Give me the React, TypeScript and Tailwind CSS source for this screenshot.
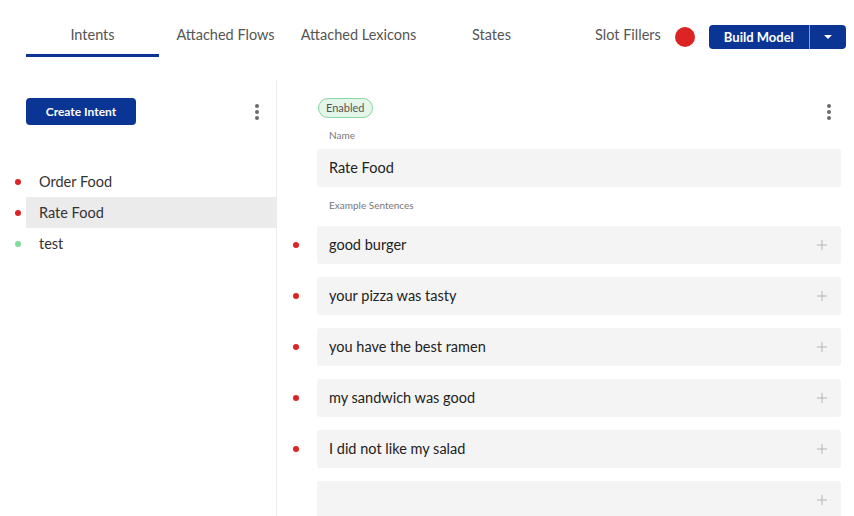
import { Plus } from "lucide-react";

const tabs = ["Intents", "Attached Flows", "Attached Lexicons", "States"];

const intents = [
    { name: "Order Food", color: "bg-[#dc2424]", active: false },
    { name: "Rate Food", color: "bg-[#dc2424]", active: true },
    { name: "test", color: "bg-[#7ddc97]", active: false },
];

const sentences = [
    "good burger",
    "your pizza was tasty",
    "you have the best ramen",
    "my sandwich was good",
    "I did not like my salad",
    "",
];

function Kebab() {
    return (
        <div className="flex flex-col items-center gap-[2px] w-[4px]">
            <span className="w-[4px] h-[4px] rounded-full bg-[#6b6b6b]" />
            <span className="w-[4px] h-[4px] rounded-full bg-[#6b6b6b]" />
            <span className="w-[4px] h-[4px] rounded-full bg-[#6b6b6b]" />
        </div>
    );
}

export default function App() {
    return (
        <div
            className="w-[854px] h-[516px] overflow-hidden bg-white text-[#333]"
            style={{ fontFamily: "Lato, 'Open Sans', sans-serif" }}
        >
            {/* top tabs */}
            <header className="flex items-start h-[80px] pt-[14px] pl-[26px]">
                {tabs.map((t, i) => (
                    <div
                        key={t}
                        className={
                            "w-[133px] h-[43px] pt-[2px] flex items-center justify-center text-[14.5px] text-[#555] border-b-[3px] " +
                            (i === 0 ? "border-[#0b3594]" : "border-transparent")
                        }
                    >
                        {t}
                    </div>
                ))}
                <div className="h-[42px] flex items-center ml-[37px] text-[14.5px] text-[#555]">Slot Fillers</div>
                <div className="h-[46px] flex items-center ml-[14px]">
                    <span className="w-[20px] h-[20px] rounded-full bg-[#dc2424]" />
                </div>
                <div className="h-[46px] flex items-center ml-[14px]">
                    <div className="flex h-[24px] w-[137px] rounded-[4px] bg-[#0b3594] text-white">
                        <div className="w-[101px] pt-[1px] flex items-center justify-center text-[13px] font-bold border-r border-[#8a9bc6]">
                            Build Model
                        </div>
                        <div className="flex-1 flex items-center justify-center">
                            <span className="w-0 h-0 border-l-[4px] border-r-[4px] border-t-[4px] border-l-transparent border-r-transparent border-t-white" />
                        </div>
                    </div>
                </div>
            </header>

            <div className="flex h-[436px]">
                {/* intents list */}
                <aside className="w-[277px] border-r border-[#ececec] pt-[18px]">
                    <div className="flex items-center justify-between pl-[26px] pr-[17px]">
                        <button className="h-[27px] w-[110px] rounded-[4px] bg-[#0b3594] text-white text-[12px] font-bold">
                            Create Intent
                        </button>
                        <Kebab />
                    </div>
                    <ul className="mt-[41px]">
                        {intents.map((it) => (
                            <li key={it.name} className="flex items-center h-[31px]">
                                <div className="w-[26px] pl-[15px]">
                                    <span className={"block w-[6px] h-[6px] rounded-full " + it.color} />
                                </div>
                                <div
                                    className={
                                        "flex-1 h-full flex items-center pl-[13px] text-[14.5px] text-[#333] " +
                                        (it.active ? "bg-[#ebebeb]" : "")
                                    }
                                >
                                    {it.name}
                                </div>
                            </li>
                        ))}
                    </ul>
                </aside>

                {/* intent detail */}
                <main className="flex-1 pt-[18px] pr-[13px]">
                    <div className="flex items-start justify-between pl-[41px] pr-[10px]">
                        <span className="h-[20px] px-[7px] flex items-center rounded-full border border-[#86d9a0] bg-[#e3f6e9] text-[11px] text-[#555]">
                            Enabled
                        </span>
                        <div className="mt-[6px]">
                            <Kebab />
                        </div>
                    </div>
                    <div className="pl-[52px] mt-[9px] h-[12px] flex items-center text-[10px] text-[#777]">Name</div>
                    <div className="ml-[40px] mt-[8px] h-[38px] rounded-[3px] bg-[#f4f4f4] flex items-center pl-[12px] text-[14.5px] text-[#222]">
                        Rate Food
                    </div>
                    <div className="pl-[52px] mt-[12px] h-[12px] flex items-center text-[10px] text-[#777]">
                        Example Sentences
                    </div>
                    <div className="mt-[15px] flex flex-col gap-[13px]">
                        {sentences.map((s, i) => (
                            <div key={i} className="flex items-center">
                                <div className="w-[40px] pl-[16px]">
                                    {s && <span className="block w-[6px] h-[6px] rounded-full bg-[#dc2424]" />}
                                </div>
                                <div className="flex-1 h-[38px] rounded-[3px] bg-[#f4f4f4] flex items-center justify-between pl-[12px] pr-[11px] text-[14.5px] text-[#222]">
                                    <span>{s}</span>
                                    <Plus size={16} strokeWidth={1.5} className="text-[#b4b4b4]" />
                                </div>
                            </div>
                        ))}
                    </div>
                </main>
            </div>
        </div>
    );
}
